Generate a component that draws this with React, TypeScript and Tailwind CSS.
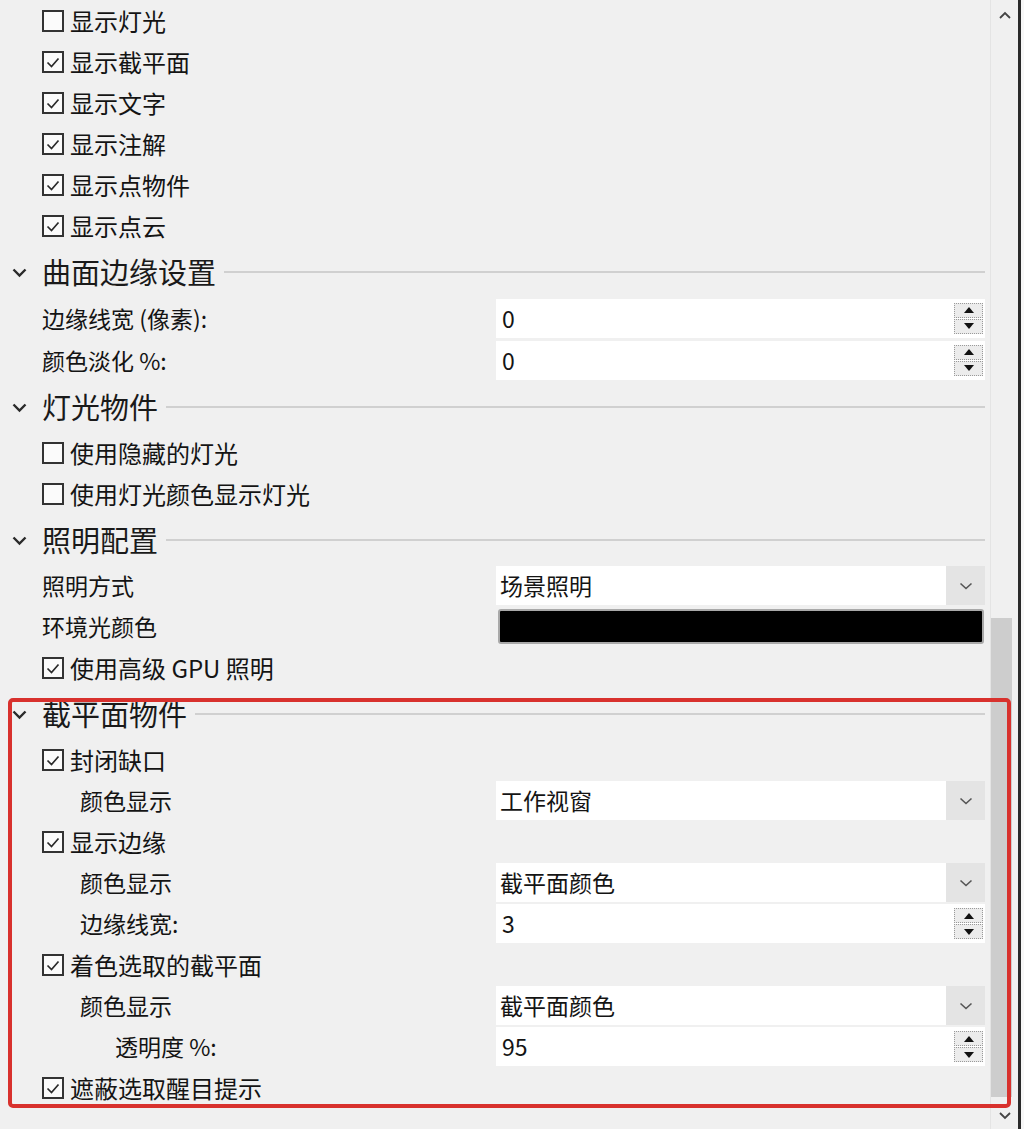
import React from "react";

type Row =
  | { kind: "check"; label: string; checked: boolean }
  | { kind: "header"; title: string }
  | { kind: "spin"; label: string; value: string; indent?: number }
  | { kind: "select"; label: string; value: string; indent?: number }
  | { kind: "color"; label: string };

const ROWS: Row[] = [
  { kind: "check", label: "显示灯光", checked: false },
  { kind: "check", label: "显示截平面", checked: true },
  { kind: "check", label: "显示文字", checked: true },
  { kind: "check", label: "显示注解", checked: true },
  { kind: "check", label: "显示点物件", checked: true },
  { kind: "check", label: "显示点云", checked: true },
  { kind: "header", title: "曲面边缘设置" },
  { kind: "spin", label: "边缘线宽 (像素):", value: "0" },
  { kind: "spin", label: "颜色淡化 %:", value: "0" },
  { kind: "header", title: "灯光物件" },
  { kind: "check", label: "使用隐藏的灯光", checked: false },
  { kind: "check", label: "使用灯光颜色显示灯光", checked: false },
  { kind: "header", title: "照明配置" },
  { kind: "select", label: "照明方式", value: "场景照明" },
  { kind: "color", label: "环境光颜色" },
  { kind: "check", label: "使用高级 GPU 照明", checked: true },
  { kind: "header", title: "截平面物件" },
  { kind: "check", label: "封闭缺口", checked: true },
  { kind: "select", label: "颜色显示", value: "工作视窗", indent: 1 },
  { kind: "check", label: "显示边缘", checked: true },
  { kind: "select", label: "颜色显示", value: "截平面颜色", indent: 1 },
  { kind: "spin", label: "边缘线宽:", value: "3", indent: 1 },
  { kind: "check", label: "着色选取的截平面", checked: true },
  { kind: "select", label: "颜色显示", value: "截平面颜色", indent: 1 },
  { kind: "spin", label: "透明度 %:", value: "95", indent: 2 },
  { kind: "check", label: "遮蔽选取醒目提示", checked: true },
];

const indentClass = (n?: number) =>
  n === 2 ? "pl-[115px]" : n === 1 ? "pl-[80px]" : "pl-[42px]";

export default function App() {
  return (
    <div className="relative flex h-[1129px] w-[1024px] overflow-hidden bg-[#f0f0f0] font-['Noto_Sans_CJK_SC','Noto_Sans',sans-serif] text-[#141414]">
      <div className="flex w-[990px] shrink-0 flex-col">
        {ROWS.map((r, i) => (
          <PropRow key={i} row={r} />
        ))}
      </div>

      <Scrollbar />
      <div className="w-[3px] shrink-0 bg-[#2a2a2a]" />
      <div className="w-[3px] shrink-0 bg-[#f7f7f7]" />

      {/* red highlight drawn over the section */}
      <div className="pointer-events-none absolute left-[8px] top-[698px] h-[410px] w-[1003px] rounded-[5px] border-[4px] border-[#d8312d]" />
    </div>
  );
}

function PropRow({ row }: { row: Row }) {
  if (row.kind === "header") {
    return (
      <div className="flex h-[51px] items-center">
        <svg width="15" height="10" viewBox="0 0 15 10" className="ml-[12px] mt-[2px]">
          <path d="M1.5 1.5 L7.5 7.5 L13.5 1.5" fill="none" stroke="#2a2a2a" strokeWidth="2.4" />
        </svg>
        <span className="ml-[15px] text-[29px] leading-none text-[#1a1a1a]">{row.title}</span>
        <div className="ml-[8px] mr-[5px] h-[2px] flex-1 bg-[#d0d0d0]" />
      </div>
    );
  }

  if (row.kind === "check") {
    return (
      <div className="flex h-[41px] items-center pl-[42px]">
        <Checkbox checked={row.checked} />
        <span className="ml-[6px] text-[24px] leading-none">{row.label}</span>
      </div>
    );
  }

  const h = row.kind === "spin" && !("indent" in row && row.indent) ? "h-[42px]" : "h-[41px]";
  return (
    <div className={`flex ${h} items-center`}>
      <div className={`flex-1 text-[23px] leading-none ${indentClass("indent" in row ? row.indent : 0)}`}>
        {row.label}
      </div>
      <div className="mr-[5px] w-[489px]">
        {row.kind === "spin" && <SpinBox value={row.value} />}
        {row.kind === "select" && <Select value={row.value} />}
        {row.kind === "color" && (
          <div className="ml-[2px] h-[35px] w-[486px] rounded-[3px] border-2 border-[#a9a9a9] bg-black" />
        )}
      </div>
    </div>
  );
}

function Checkbox({ checked }: { checked: boolean }) {
  return (
    <span className="flex h-[22px] w-[22px] items-center justify-center border-2 border-[#333] bg-[#fbfbfb]">
      {checked && (
        <svg width="16" height="16" viewBox="0 0 16 16">
          <path d="M2.5 8.5 L6.5 12.5 L13.5 4.5" fill="none" stroke="#2a2a2a" strokeWidth="1.7" />
        </svg>
      )}
    </span>
  );
}

function SpinBox({ value }: { value: string }) {
  return (
    <div className="flex h-[39px] items-center bg-white">
      <span className="flex-1 pl-[6px] text-[23px] leading-none">{value}</span>
      <div className="mr-[2px] flex flex-col gap-[1px]">
        <SpinButton up />
        <SpinButton />
      </div>
    </div>
  );
}

function SpinButton({ up }: { up?: boolean }) {
  return (
    <span className="flex h-[15px] w-[29px] items-center justify-center border border-dotted border-[#9a9a9a] bg-[#ececec]">
      <svg width="10" height="6" viewBox="0 0 10 6">
        <path d={up ? "M0 6 L5 0 L10 6 Z" : "M0 0 L10 0 L5 6 Z"} fill="#111" />
      </svg>
    </span>
  );
}

function Select({ value }: { value: string }) {
  return (
    <div className="flex h-[39px]">
      <div className="flex flex-1 items-center bg-white pl-[4px] text-[23px] leading-none">{value}</div>
      <div className="flex w-[39px] items-center justify-center bg-[#e4e4e4]">
        <svg width="14" height="8" viewBox="0 0 14 8">
          <path d="M1.5 1.5 L7 6.5 L12.5 1.5" fill="none" stroke="#555" strokeWidth="1.6" />
        </svg>
      </div>
    </div>
  );
}

function Scrollbar() {
  return (
    <div className="flex w-[28px] shrink-0 flex-col border-l border-[#e4e4e4] bg-[#f0f0f0]">
      <div className="flex h-[30px] items-center justify-center pl-[1px]">
        <svg width="12" height="8" viewBox="0 0 12 8">
          <path d="M1 7 L6 2 L11 7" fill="none" stroke="#444" strokeWidth="1.8" />
        </svg>
      </div>
      <div className="flex flex-1 flex-col">
        <div className="h-[588px]" />
        <div className="h-[479px] w-[21px] bg-[#cdcdcd]" />
      </div>
      <div className="flex h-[26px] items-center justify-center pl-[1px]">
        <svg width="12" height="8" viewBox="0 0 12 8">
          <path d="M1 1 L6 6 L11 1" fill="none" stroke="#444" strokeWidth="1.8" />
        </svg>
      </div>
    </div>
  );
}
